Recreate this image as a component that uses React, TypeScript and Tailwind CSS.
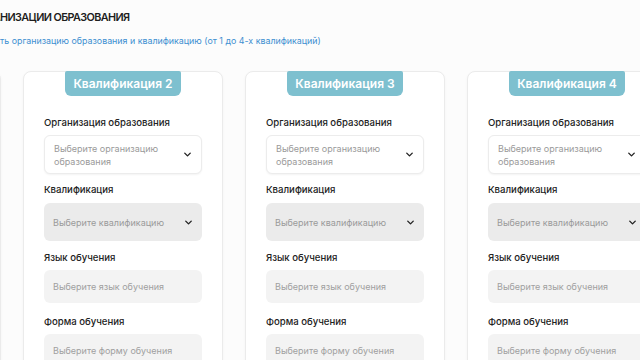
import { ChevronDown } from "lucide-react";

const cards = [1, 2, 3, 4];

function Label({ children }: { children: React.ReactNode }) {
  return (
    <div className="text-[9.6px] font-medium leading-[12px] text-[#222]">{children}</div>
  );
}

function QualificationCard({ n }: { n: number }) {
  return (
    <div className="relative w-[200px] shrink-0 rounded-[8px] border border-[#ebebeb] bg-white px-[20px] pb-6 shadow-[0_1px_3px_rgba(0,0,0,0.04)]">
      <div className="flex justify-center">
        <div className="-mt-px flex h-[25px] items-center rounded-b-[6px] rounded-t-[2px] bg-[#7ec0cf] px-[8px] text-[12px] font-semibold text-white">
          Квалификация {n}
        </div>
      </div>

      <div className="mt-[21px]">
        <Label>Организация образования</Label>
        <div className="mt-[6px] flex h-[39px] items-center justify-between rounded-[6px] border border-[#ececec] bg-white pl-[9px] pr-[8px] shadow-[0_1px_2px_rgba(0,0,0,0.05)]">
          <span className="text-[9px] leading-[13px] text-[#9a9a9a]">
            Выберите организацию
            <br />
            образования
          </span>
          <ChevronDown className="h-[11px] w-[11px] text-[#222]" strokeWidth={3} />
        </div>
      </div>

      <div className="mt-[10px]">
        <Label>Квалификация</Label>
        <div className="mt-[7px] flex h-[38px] items-center justify-between rounded-[6px] bg-[#ebebeb] pl-[9px] pr-[8px]">
          <span className="text-[9px] text-[#9a9a9a]">Выберите квалификацию</span>
          <ChevronDown className="h-[11px] w-[11px] text-[#222]" strokeWidth={3} />
        </div>
      </div>

      <div className="mt-[11px]">
        <Label>Язык обучения</Label>
        <div className="mt-[6px] flex h-[33px] items-center rounded-[6px] bg-[#f3f3f3] pl-[9px]">
          <span className="text-[9px] text-[#a0a0a0]">Выберите язык обучения</span>
        </div>
      </div>

      <div className="mt-[13px]">
        <Label>Форма обучения</Label>
        <div className="mt-[6px] flex h-[33px] items-center rounded-[6px] bg-[#f3f3f3] pl-[9px]">
          <span className="text-[9px] text-[#a0a0a0]">Выберите форму обучения</span>
        </div>
      </div>
    </div>
  );
}

export default function App() {
  return (
    <div
      className="h-[360px] w-[640px] overflow-hidden bg-[#fcfcfc]"
      style={{ fontFamily: "Inter, 'Noto Sans', sans-serif" }}
    >
      <div className="pt-[10px]">
        <h2 className="ml-[-26px] whitespace-nowrap text-[10.8px] font-semibold leading-[15px] tracking-[-0.6px] text-[#1e1e1e]">
          ОРГАНИЗАЦИИ ОБРАЗОВАНИЯ
        </h2>
        <p className="ml-[-33px] mt-[9px] whitespace-nowrap text-[8.85px] text-[#3d8fd1]">
          Добавить организацию образования и квалификацию (от 1 до 4-х квалификаций)
        </p>
      </div>
      <div className="ml-[-199px] mt-[24px] flex gap-[22px]">
        {cards.map((n) => (
          <QualificationCard key={n} n={n} />
        ))}
      </div>
    </div>
  );
}
